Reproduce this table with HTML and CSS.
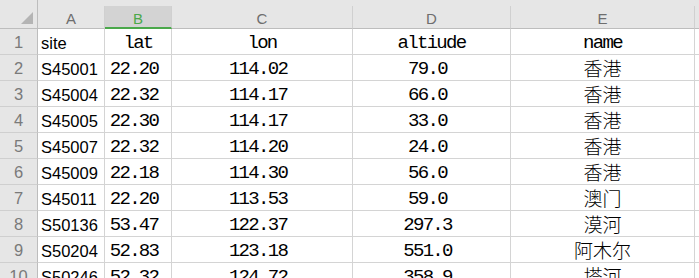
FILE: index.html
```html
<!DOCTYPE html>
<html>
<head>
<meta charset="utf-8">
<link rel="stylesheet" href="styles.css">
</head>
<body>
<div class="sheet">
  <div class="hd corner"><span class="tri"></span></div>
  <div class="hd col">A</div>
  <div class="hd col sel">B</div>
  <div class="hd col">C</div>
  <div class="hd col">D</div>
  <div class="hd col">E</div>
  <div class="hd col last"></div>

  <div class="rn">1</div><div class="c sans">site</div><div class="c mono ctr">lat</div><div class="c mono ctr">lon</div><div class="c mono ctr">altiude</div><div class="c mono ctr">name</div><div class="c f"></div>
  <div class="rn">2</div><div class="c sans">S45001</div><div class="c mono num">22.20</div><div class="c mono num">114.02</div><div class="c mono num">79.0</div><div class="c cjk ctr">香港</div><div class="c f"></div>
  <div class="rn">3</div><div class="c sans">S45004</div><div class="c mono num">22.32</div><div class="c mono num">114.17</div><div class="c mono num">66.0</div><div class="c cjk ctr">香港</div><div class="c f"></div>
  <div class="rn">4</div><div class="c sans">S45005</div><div class="c mono num">22.30</div><div class="c mono num">114.17</div><div class="c mono num">33.0</div><div class="c cjk ctr">香港</div><div class="c f"></div>
  <div class="rn">5</div><div class="c sans">S45007</div><div class="c mono num">22.32</div><div class="c mono num">114.20</div><div class="c mono num">24.0</div><div class="c cjk ctr">香港</div><div class="c f"></div>
  <div class="rn">6</div><div class="c sans">S45009</div><div class="c mono num">22.18</div><div class="c mono num">114.30</div><div class="c mono num">56.0</div><div class="c cjk ctr">香港</div><div class="c f"></div>
  <div class="rn">7</div><div class="c sans">S45011</div><div class="c mono num">22.20</div><div class="c mono num">113.53</div><div class="c mono num">59.0</div><div class="c cjk ctr">澳门</div><div class="c f"></div>
  <div class="rn">8</div><div class="c sans">S50136</div><div class="c mono num">53.47</div><div class="c mono num">122.37</div><div class="c mono num">297.3</div><div class="c cjk ctr">漠河</div><div class="c f"></div>
  <div class="rn">9</div><div class="c sans">S50204</div><div class="c mono num">52.83</div><div class="c mono num">123.18</div><div class="c mono num">551.0</div><div class="c cjk ctr">阿木尔</div><div class="c f"></div>
  <div class="rn">10</div><div class="c sans">S50246</div><div class="c mono num">52.32</div><div class="c mono num">124.72</div><div class="c mono num">358.9</div><div class="c cjk ctr">塔河</div><div class="c f"></div>
</div>
</body>
</html>
```

FILE: styles.css
```css
html, body {
  margin: 0;
  padding: 0;
  background: #ffffff;
  overflow: hidden;
}
.sheet {
  display: grid;
  grid-template-columns: 38px 67px 67px 181px 158px 184px 1fr;
  grid-template-rows: 29px repeat(10, 26px);
  width: 699px;
  background: #e6e6e6;
}
.hd {
  box-sizing: border-box;
  background: #e6e6e6;
  border-bottom: 1px solid #bdbdbd;
  position: relative;
}
.corner {
  border-right: 1px solid #bdbdbd;
}
.tri {
  position: absolute;
  right: 4px;
  bottom: 4px;
  width: 0;
  height: 0;
  border-style: solid;
  border-width: 0 0 12px 12px;
  border-color: transparent transparent #b4b4b4 transparent;
}
.col {
  margin-top: 6px;
  border-right: 1px solid #d0d0d0;
  font-family: "Liberation Sans", Arial, sans-serif;
  font-size: 15px;
  color: #6e6e6e;
  display: flex;
  align-items: flex-end;
  justify-content: center;
  padding-bottom: 2px;
  line-height: 1;
}
.col.sel {
  background: #d3d3d3;
  border-bottom: 2px solid #4aa84a;
  color: #4aa84a;
  padding-bottom: 1px;
}
.col.last {
  border-right: none;
}
.rn {
  box-sizing: border-box;
  background: #e6e6e6;
  border-right: 1px solid #bdbdbd;
  border-bottom: 1px solid #cfcfcf;
  font-family: "Liberation Sans", Arial, sans-serif;
  font-size: 16.5px;
  color: #7a7a7a;
  display: flex;
  align-items: flex-end;
  justify-content: center;
  line-height: 1;
  padding-bottom: 4px;
}
.c {
  box-sizing: border-box;
  background: #ffffff;
  border-right: 1px solid #d4d4d4;
  border-bottom: 1px solid #d4d4d4;
  color: #000000;
  display: flex;
  align-items: flex-end;
  white-space: nowrap;
}
.c.f {
  border-right: none;
}
.sans {
  font-family: "Liberation Sans", Arial, sans-serif;
  font-size: 16.5px;
  line-height: 1;
  padding-left: 3px;
  padding-bottom: 3px;
}
.mono {
  font-family: "Liberation Mono", "Courier New", monospace;
  font-size: 19px;
  letter-spacing: -1.7px;
  line-height: 1;
  padding-bottom: 1px;
}
.ctr {
  justify-content: center;
}
.num {
  justify-content: center;
  padding-right: 8px;
}
.cjk {
  font-family: "Noto Sans CJK SC", sans-serif;
  font-size: 19px;
  font-weight: 300;
  line-height: 24px;
  padding-bottom: 0;
}
```
